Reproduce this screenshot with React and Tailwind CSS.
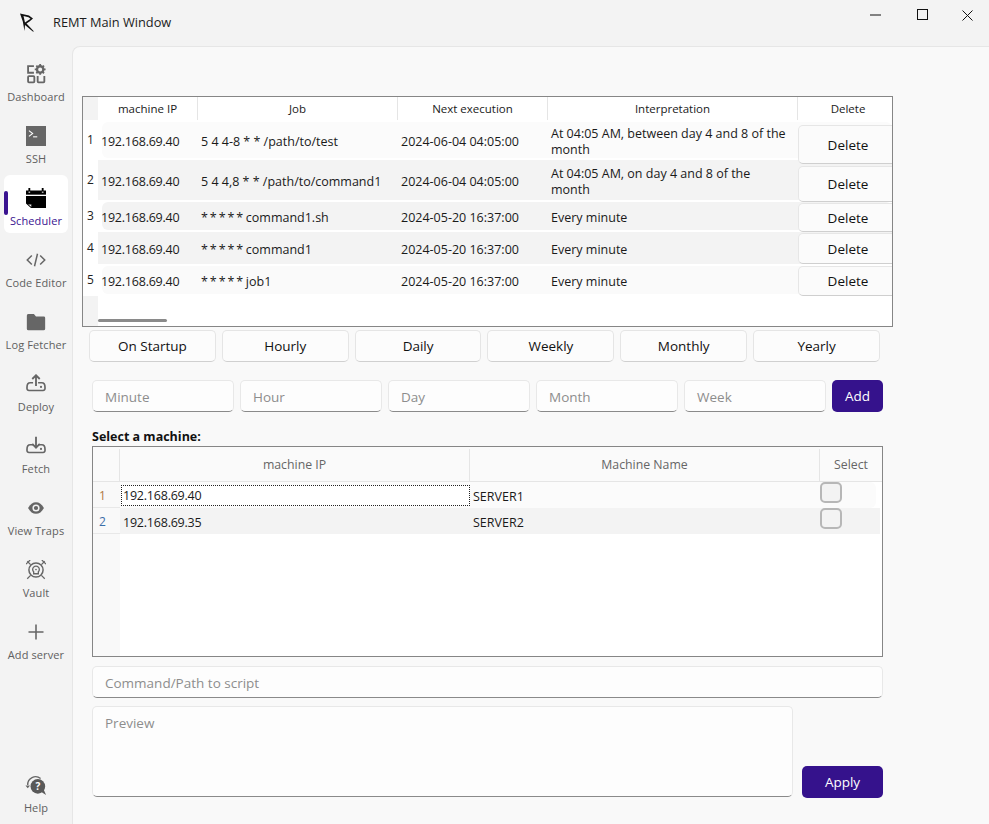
import React from "react";

const font = { fontFamily: '"Open Sans", "Noto Sans", sans-serif' };

const Svg = ({ children, size = 20 }) => (
  <svg width={size} height={size} viewBox="0 0 24 24" className="block">{children}</svg>
);

const icons = {
  Dashboard: (
    <Svg>
      <g fill="none" stroke="#666" strokeWidth="2.200">
        <path d="M9.500 2.500H2.500v8h7" />
        <rect x="2.500" y="14.500" width="7.500" height="7.500" rx="1" />
        <path d="M14 14.500V21a1 1 0 0 0 1 1h6a1 1 0 0 0 1-1v-6.500" />
      </g>
      <circle cx="17" cy="6.500" r="3.800" fill="none" stroke="#666" strokeWidth="2.800" />
      <path d="M17 0v2.500M17 10.500V13M10.500 6.500H13M21 6.500h2.500M12.400 1.900l1.800 1.800M19.800 9.300l1.800 1.800M12.400 11.100l1.800-1.800M19.800 3.700l1.800-1.800" stroke="#666" strokeWidth="2.200" />
    </Svg>
  ),
  SSH: (
    <Svg>
      <rect x="0" y="0" width="24" height="24" fill="#666" />
      <path d="M3.500 5.500l4.500 3.500-4.500 3.500" fill="none" stroke="#fff" strokeWidth="1.300" />
      <path d="M8.500 13h5" stroke="#fff" strokeWidth="1.300" />
    </Svg>
  ),
  Scheduler: (
    <Svg>
      <path d="M0 3h24v5H0z" fill="#000" />
      <path d="M4 0v6M20 0v6" stroke="#000" strokeWidth="2.200" />
      <path d="M3 5h2M19 5h2" stroke="#fff" strokeWidth="1.200" />
      <path d="M0 9.500h24V24H6l-6-5.500z" fill="#000" />
      <path d="M2 19.500h4.500V23z" fill="#fff" stroke="#000" strokeWidth=".6" />
    </Svg>
  ),
  "Code Editor": (
    <Svg>
      <path d="M7 6.500L1.500 12 7 17.500M17 6.500l5.500 5.500L17 17.500M13.800 4.500L10.200 19.500" fill="none" stroke="#666" strokeWidth="1.800" />
    </Svg>
  ),
  "Log Fetcher": (
    <Svg>
      <path d="M1 4.500A1.800 1.800 0 0 1 2.800 2.500h6.700l2.500 3h9.800A1.700 1.700 0 0 1 23 7.200V20a2 2 0 0 1-2 2H3a2 2 0 0 1-2-2z" fill="#666" />
    </Svg>
  ),
  Deploy: (
    <Svg>
      <path d="M12 14.500V1.500M7.500 6L12 1.500 16.500 6" fill="none" stroke="#666" strokeWidth="2.200" />
      <path d="M8.500 10.500H5c-3 0-3.800 2-3.800 5.500v1.500a2.300 2.300 0 0 0 2.300 2.300h17a2.300 2.300 0 0 0 2.300-2.300V16c0-3.500-.8-5.500-3.800-5.500h-4.500" fill="none" stroke="#666" strokeWidth="2" />
      <circle cx="18" cy="15.500" r="1.300" fill="#666" />
    </Svg>
  ),
  Fetch: (
    <Svg>
      <path d="M12 1v13M7.500 9.500L12 14l4.500-4.500" fill="none" stroke="#666" strokeWidth="2.200" />
      <path d="M8.500 10.500H5c-3 0-3.800 2-3.800 5.500v1.500a2.300 2.300 0 0 0 2.300 2.300h17a2.300 2.300 0 0 0 2.300-2.300V16c0-3.500-.8-5.500-3.800-5.500h-4.500" fill="none" stroke="#666" strokeWidth="2" />
      <circle cx="18" cy="15.500" r="1.300" fill="#666" />
    </Svg>
  ),
  "View Traps": (
    <Svg>
      <path d="M2.500 12C5 7.300 8.200 5 12 5s7 2.300 9.500 7c-2.500 4.700-5.700 7-9.500 7s-7-2.300-9.500-7z" fill="#666" />
      <circle cx="12" cy="12" r="4.300" fill="#f3f3f3" />
      <circle cx="12" cy="12" r="2.500" fill="#666" />
    </Svg>
  ),
  Vault: (
    <Svg>
      <circle cx="12" cy="12" r="8.500" fill="none" stroke="#666" strokeWidth="1.800" />
      <path d="M9.200 16.500v-2.300a4 4 0 1 1 5.600 0v2.300z" fill="none" stroke="#666" strokeWidth="1.600" />
      <circle cx="12" cy="11.500" r="1" fill="#666" />
      <path d="M1.500 1.500l4 4M22.500 1.500l-4 4M1.500 22.500l4-4M22.500 22.500l-4-4M0 5l5-5M19 0l5 5" stroke="#666" strokeWidth="1.500" />
    </Svg>
  ),
  "Add server": (
    <Svg>
      <path d="M12 3v18M3 12h18" stroke="#666" strokeWidth="1.900" />
    </Svg>
  ),
};

const navItems = ["Dashboard", "SSH", "Scheduler", "Code Editor", "Log Fetcher", "Deploy", "Fetch", "View Traps", "Vault", "Add server"];

function NavItem({ name }) {
  const active = name === "Scheduler";
  return (
    <div className={`relative mx-1 flex h-[58px] w-16 flex-col items-center rounded-md ${active ? "bg-white" : ""}`}>
      {active && <div className="absolute left-0 top-4 h-6 w-1 rounded-sm bg-[#3a1390]" />}
      <div className="mt-2 flex h-[30px] w-full items-center justify-center">{icons[name]}</div>
      <div className={`text-center text-[11px] leading-4 tracking-[0.1px] whitespace-nowrap ${active ? "text-[#3a1390]" : "text-[#606060]"}`}>{name}</div>
    </div>
  );
}

const jobs = [
  { h: "h-10", job: "5 4 4-8 * * /path/to/test", next: "2024-06-04 04:05:00", int: "At 04:05 AM, between day 4 and 8 of the month", style: "inset", bg: "bg-[#fbfbfb]", btn: "top-[5px] h-[39px]" },
  { h: "h-10", job: "5 4 4,8 * * /path/to/command1", next: "2024-06-04 04:05:00", int: "At 04:05 AM, on day 4 and 8 of the month", style: "full", bg: "bg-[#f3f3f3]", btn: "top-[6px] h-[36px]" },
  { h: "h-8", stars: "command1.sh", next: "2024-05-20 16:37:00", int: "Every minute", style: "inset", bg: "bg-[#f3f3f3]", btn: "top-[3px] h-[29px]" },
  { h: "h-8", stars: "command1", next: "2024-05-20 16:37:00", int: "Every minute", style: "full", bg: "bg-[#f3f3f3]", btn: "top-px h-[31px]" },
  { h: "h-8", stars: "job1", next: "2024-05-20 16:37:00", int: "Every minute", style: "inset", bg: "bg-[#fafafa]", btn: "top-[2px] h-[30px]" },
];

function JobRow({ r, i }) {
  const inset = r.style === "inset";
  return (
    <div className={`relative flex ${r.h} items-center text-[12.500px] leading-4 text-[#1a1a1a]`}>
      <div className="flex w-[15px] shrink-0 justify-center bg-white text-[12px] text-[#222]">{i + 1}</div>
      <div className={`flex h-full min-w-0 flex-1 items-center ${inset ? "py-0.5 pl-1" : r.bg}`}>
        <div className={`flex h-full flex-1 items-center pt-[3px] ${inset ? `${r.bg} rounded-md` : "pl-1"}`}>
          <div className="-ml-px w-[100px] shrink-0 whitespace-nowrap tracking-[-0.22px]">192.168.69.40</div>
          <div className="w-[200px] shrink-0 whitespace-nowrap">
            {r.stars ? <><span className="tracking-[-0.65px]">* * * * *</span> {r.stars}</> : r.job}
          </div>
          <div className="w-[150px] shrink-0 whitespace-nowrap">{r.next}</div>
          <div className="w-[240px] shrink-0">{r.int}</div>
        </div>
      </div>
      <div className={`absolute left-[715px] z-10 flex w-[100px] items-center justify-center rounded-[5px] border border-[#e6e6e6] border-b-[#cfcfcf] bg-[#fbfbfb] text-[13.500px] text-[#111] ${r.btn}`}>Delete</div>
    </div>
  );
}

function TabButton({ label }) {
  return <div className="flex h-8 flex-1 items-center justify-center rounded-[5px] border border-[#e5e5e5] border-b-[#d0d0d0] bg-[#fcfcfc] text-[13.500px] text-[#111]">{label}</div>;
}

function Field({ label, className = "" }) {
  return <div className={`flex h-8 items-center rounded-[5px] border border-[#e8e8e8] border-b-[#8a8a8a] bg-[#fdfdfd] pl-3 pt-[3px] text-[13.500px] text-[#8d8d8d] ${className}`}>{label}</div>;
}

function PurpleButton({ label, className = "" }) {
  return <div className={`flex items-center justify-center rounded-[5px] bg-[#35128c] text-[13.500px] text-white ${className}`}>{label}</div>;
}

function Checkbox() {
  return <div className="mb-[5px] h-[21px] w-[22px] rounded-[5px] border-2 border-[#b7b7b7] bg-[#f3f3f3]" />;
}

export default function App() {
  return (
    <div style={font} className="flex h-[824px] w-[989px] flex-col overflow-hidden bg-[#f3f3f3]">
      {/* title bar */}
      <div className="flex h-[46px] shrink-0 items-center">
        <div className="ml-[18px] h-[22px] w-[18px]">
          <svg width="18" height="22" viewBox="0 0 18 22" className="block">
            <path d="M2 1.500L11 3.500 15 6.500 11.500 9.500 8.500 11.500 16 19.500 14.800 19.500 7 13 6.500 19 4.800 9.500z" fill="#111" />
            <path d="M5.500 4L10.500 5.300 12.500 6.800 7 10.500z" fill="#f3f3f3" />
          </svg>
        </div>
        <div className="ml-[17px] text-[12.800px] text-[#1c1c1c]">REMT Main Window</div>
        <div className="ml-auto flex items-center self-start pt-[9px] pr-[16px]">
          <svg width="12" height="2" className="mr-[35px]"><path d="M0 1h11" stroke="#111" strokeWidth="1" /></svg>
          <svg width="12" height="12" className="mr-[33px]"><rect x=".5" y=".5" width="10" height="10" fill="none" stroke="#111" /></svg>
          <svg width="11" height="11"><path d="M.5.5l10 10M10.500.5l-10 10" stroke="#111" strokeWidth="1" /></svg>
        </div>
      </div>

      <div className="flex min-h-0 flex-1">
        {/* sidebar */}
        <nav className="flex h-full w-[72px] shrink-0 flex-col pt-[5px] pb-2">
          <div className="flex flex-col gap-1">
            {navItems.map((n) => <NavItem key={n} name={n} />)}
          </div>
          <div className="mt-auto flex flex-col items-center">
            <div className="flex h-[30px] items-center justify-center">
              <svg width="22" height="22" viewBox="0 0 24 24">
                <path d="M3 12a8.500 8.500 0 0 1 14-7" fill="none" stroke="#666" strokeWidth="1.500" />
                <path d="M.5 12.500l2.500 3 2.500-3" fill="#666" />
                <circle cx="14" cy="13.500" r="8" fill="#595959" />
                <path d="M17 19l6 4-3-7z" fill="#595959" />
                <text x="14" y="17.500" fontSize="11" fontWeight="700" textAnchor="middle" fill="#fff" fontFamily="Open Sans">?</text>
              </svg>
            </div>
            <div className="text-[11px] leading-4 tracking-[0.1px] text-[#606060]">Help</div>
          </div>
        </nav>

        {/* main panel */}
        <main className="min-w-0 flex-1 rounded-tl-lg border-t border-l border-[#e6e6e6] bg-[#f9f9f9] pl-[9px] pt-[49px]">
          {/* jobs table */}
          <div className="h-[231px] w-[811px] overflow-hidden border border-[#868686] bg-white">
            <div className="flex h-[23px] text-[11.500px] text-[#1a1a1a]">
              <div className="w-[15px] shrink-0 bg-[#f3f3f3]" />
              {[["machine IP", "w-[100px]"], ["Job", "w-[200px]"], ["Next execution", "w-[150px]"], ["Interpretation", "w-[250px]"], ["Delete", "w-[100px]"]].map(([t, w], i) => (
                <div key={t} className={`flex ${w} shrink-0 items-center justify-center ${i < 4 ? "border-r border-[#e5e5e5]" : ""}`}>{t}</div>
              ))}
            </div>
            {jobs.map((r, i) => <JobRow key={i} r={r} i={i} />)}
            <div className="flex h-[31px]">
              <div className="w-[15px] bg-[#f3f3f3]" />
              <div className="flex-1 pt-[23px]"><div className="h-[3px] w-[69px] rounded-full bg-[#8a8a8a]" /></div>
            </div>
          </div>

          {/* quick schedule */}
          <div className="ml-[7px] mt-[3px] flex w-[791px] gap-[6px]">
            {["On Startup", "Hourly", "Daily", "Weekly", "Monthly", "Yearly"].map((t) => <TabButton key={t} label={t} />)}
          </div>

          {/* cron fields */}
          <div className="ml-[10px] mt-[18px] flex w-[791px] gap-[6px]">
            {["Minute", "Hour", "Day", "Month", "Week"].map((t) => <Field key={t} label={t} className="w-[142px]" />)}
            <PurpleButton label="Add" className="h-8 w-[51px]" />
          </div>

          <div className="ml-[10px] mt-[17px] mb-px text-[12.500px] leading-4 font-bold text-[#111]">Select a machine:</div>

          {/* machines table */}
          <div className="ml-[10px] h-[211px] w-[791px] overflow-hidden border border-[#868686] bg-white">
            <div className="flex h-[35px] border-b border-[#e5e5e5] bg-[#fafafa] pt-[2px] text-[12.300px] text-[#666]">
              <div className="w-[27px] border-r border-[#e5e5e5]" />
              <div className="flex w-[350px] items-center justify-center border-r border-[#e5e5e5]">machine IP</div>
              <div className="flex w-[350px] items-center justify-center border-r border-[#e5e5e5]">Machine Name</div>
              <div className="flex flex-1 items-center justify-center">Select</div>
            </div>
            <div className="flex h-[175px]">
              <div className="w-[27px] shrink-0 bg-[#f9f9f9] text-[12px] text-[#555]">
                <div className="flex h-[26px] items-center border-b border-[#e8e8e8] pl-[6px] pt-[3px] text-[#b07a45]">1</div>
                <div className="flex h-[26px] items-center border-b border-[#e8e8e8] pl-[6px] pt-[3px] text-[#3b6ea8]">2</div>
              </div>
              <div className="flex-1 text-[12.500px] text-[#1a1a1a]">
                <div className="flex h-[26px] w-[756px] items-center rounded-r-md bg-[#fbfbfb]">
                  <div className="ml-px flex h-[21px] w-[349px] items-center border border-dotted border-[#222] bg-white pl-px pt-[3px] tracking-[-0.22px]">192.168.69.40</div>
                  <div className="w-[350px] pl-[3px] pt-[4px]">SERVER1</div>
                  <Checkbox />
                </div>
                <div className="flex h-[26px] w-[760px] items-center bg-[#f3f3f3]">
                  <div className="w-[350px] pl-[3px] pt-[4px] tracking-[-0.22px]">192.168.69.35</div>
                  <div className="w-[350px] pl-[3px] pt-[4px]">SERVER2</div>
                  <Checkbox />
                </div>
              </div>
            </div>
          </div>

          <Field label="Command/Path to script" className="ml-[10px] mt-[9px] w-[791px]" />

          <div className="ml-[10px] mt-[8px] flex w-[791px] items-end justify-between">
            <div className="h-[91px] w-[701px] rounded-[5px] border border-[#e8e8e8] border-b-[#8a8a8a] bg-[#fdfdfd] pl-3 pt-[6px] text-[13.500px] leading-5 text-[#8d8d8d]">Preview</div>
            <PurpleButton label="Apply" className="-mb-px h-8 w-[81px]" />
          </div>
        </main>
      </div>
    </div>
  );
}
